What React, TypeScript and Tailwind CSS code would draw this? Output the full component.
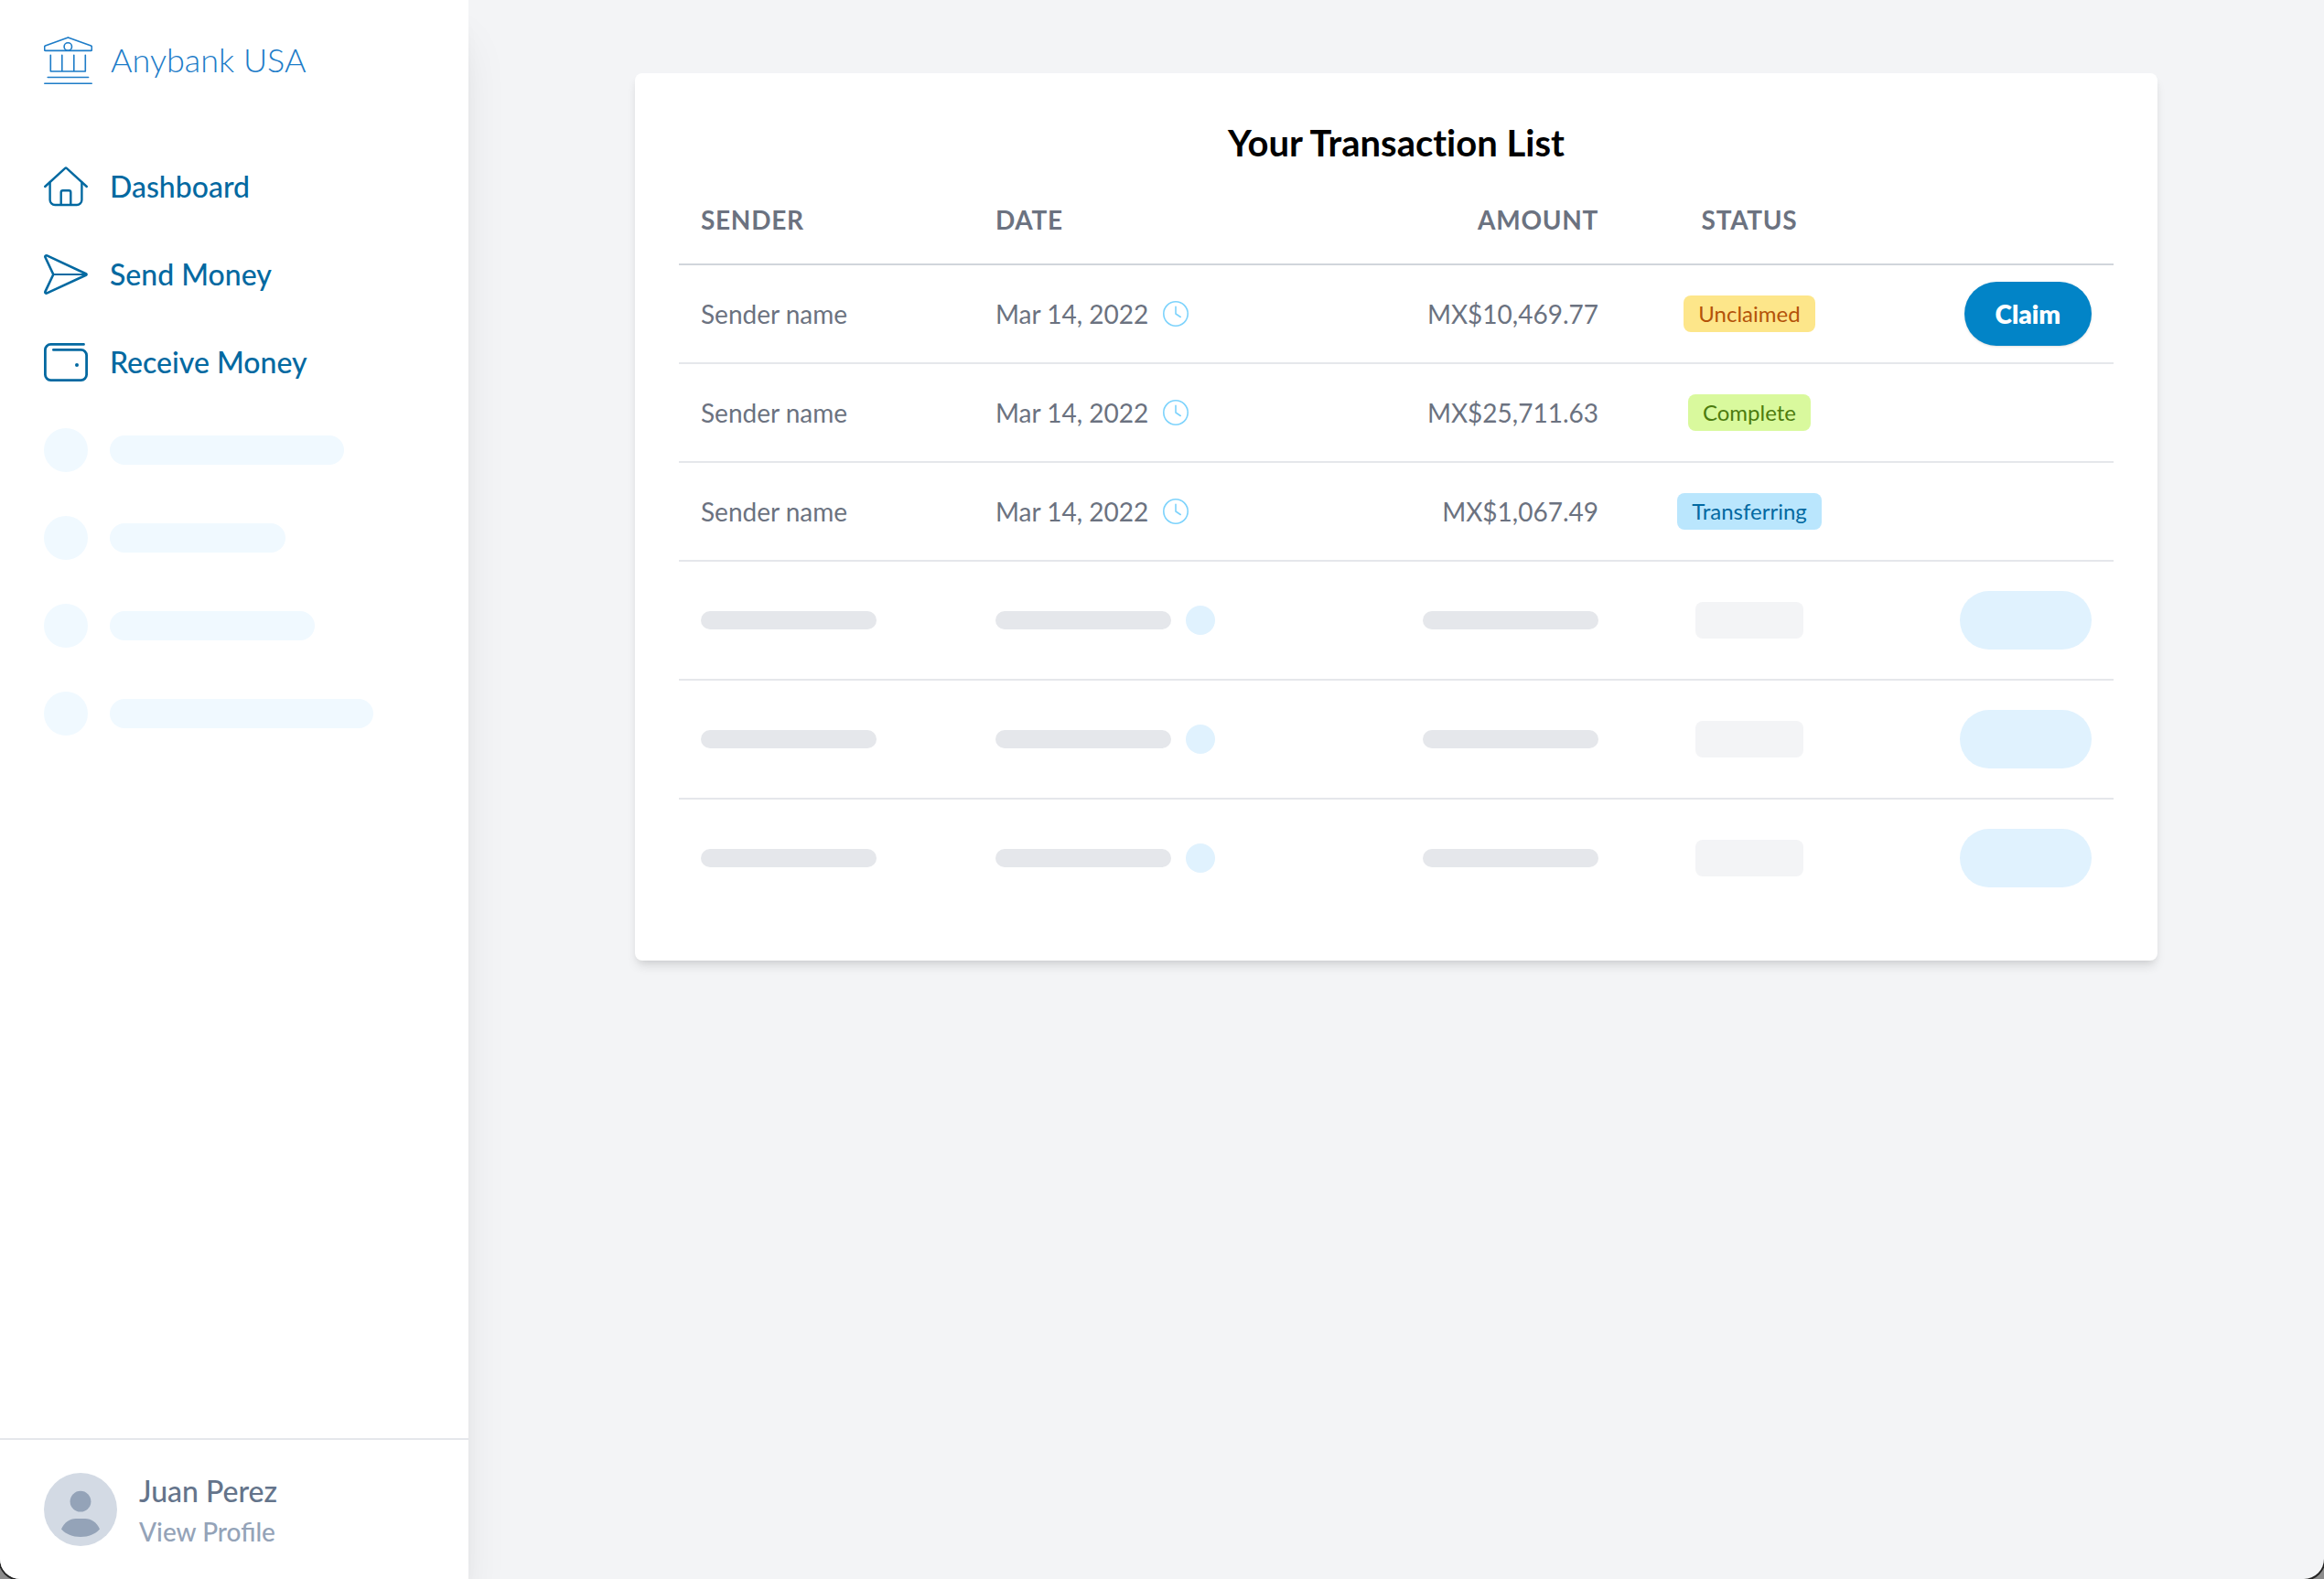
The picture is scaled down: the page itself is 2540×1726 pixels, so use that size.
import React from 'react';

interface Transaction {
  sender: string;
  date: string;
  amount: string;
  status: 'Unclaimed' | 'Complete' | 'Transferring';
}

const transactions: Transaction[] = [
  { sender: 'Sender name', date: 'Mar 14, 2022', amount: 'MX$10,469.77', status: 'Unclaimed' },
  { sender: 'Sender name', date: 'Mar 14, 2022', amount: 'MX$25,711.63', status: 'Complete' },
  { sender: 'Sender name', date: 'Mar 14, 2022', amount: 'MX$1,067.49', status: 'Transferring' },
];

const statusColors = {
  Unclaimed: 'bg-[#fde68a] text-[#b45309]',
  Complete: 'bg-[#d9f99d] text-[#4d7c0f]',
  Transferring: 'bg-[#bae6fd] text-[#0369a1]',
};

const BankLogo = () => (
  <svg className="h-[53px] w-[53px]" viewBox="0 0 53 53" fill="none" stroke="currentColor" strokeWidth="1.6" strokeLinecap="round" strokeLinejoin="round" aria-hidden="true">
    <path d="M1.5 15.4a.8.8 0 0 1-.8-.8v-3.5c0-.5.3-.9.8-1.1L26.4.9 51.5 10c.5.2.8.6.8 1.1v3.5a.8.8 0 0 1-.8.8z" />
    <circle cx="26.3" cy="11" r="4.2" />
    <path d="M7.3 20.3V38h38V20.3M19.8 20.3V38M32.8 20.3V38M4.2 44.5h44.4M.8 51.2h51.4" />
  </svg>
);

const HomeIcon = () => (
  <svg className="h-12 w-12" viewBox="0 0 48 48" fill="none" stroke="currentColor" strokeWidth="2.4" strokeLinecap="round" strokeLinejoin="round" aria-hidden="true">
    <path d="M1.2 24 23.2 3.9c.5-.4 1.1-.4 1.6 0L46.8 24" />
    <path d="M6.6 19.5v19a5.5 5.5 0 0 0 5.5 5.5h23.8a5.5 5.5 0 0 0 5.5-5.5v-19" />
    <path d="M18.7 43.8V30.2a2 2 0 0 1 2-2h6.6a2 2 0 0 1 2 2v13.6" />
  </svg>
);

const SendIcon = () => (
  <svg className="h-12 w-12" viewBox="0 0 48 48" fill="none" stroke="currentColor" strokeWidth="2.6" strokeLinecap="round" strokeLinejoin="round" aria-hidden="true">
    <path d="M3.4 3.4 45.9 23.2c.8.4.8 1.2 0 1.6L3.4 44.4c-1.3.6-2.5-.5-1.9-1.8L10.3 24 1.5 5.2c-.6-1.3.6-2.4 1.9-1.8z" />
    <path d="M10.3 24h36" strokeWidth="2.2" />
  </svg>
);

const WalletIcon = () => (
  <svg className="h-12 w-12" viewBox="0 0 48 48" fill="none" stroke="currentColor" strokeWidth="2.8" strokeLinecap="round" strokeLinejoin="round" aria-hidden="true">
    <path d="M43.5 4.4H7.4a6 6 0 0 0-6 6v27.2a6 6 0 0 0 6 6h33.2a6 6 0 0 0 6-6V16.4a6 6 0 0 0-6-6H10.4" />
    <circle cx="36" cy="27" r="2" fill="currentColor" stroke="none" />
  </svg>
);

const ClockIcon = () => (
  <svg className="h-8 w-8 text-[#7dd3fc]" viewBox="0 0 32 32" fill="none" stroke="currentColor" strokeWidth="1.6" strokeLinecap="round" strokeLinejoin="round" aria-hidden="true">
    <circle cx="16" cy="16" r="13.2" />
    <path d="M16 8.3V16l5.2 3.5" />
  </svg>
);

const Avatar = () => (
  <svg className="h-20 w-20" viewBox="0 0 80 80" aria-hidden="true">
    <circle cx="40" cy="40" r="40" fill="#d3dae4" />
    <circle cx="40" cy="31.2" r="11.4" fill="#94a3b8" />
    <path d="M19 61.5C22.5 54 28 50 35 50h10c7 0 12.5 4 16 11.5-5 5.5-12 8.5-21 8.5s-16-3-21-8.5z" fill="#94a3b8" />
  </svg>
);

const navItems = [
  { label: 'Dashboard', icon: <HomeIcon /> },
  { label: 'Send Money', icon: <SendIcon /> },
  { label: 'Receive Money', icon: <WalletIcon /> },
];

const navPlaceholders = ['w-64', 'w-48', 'w-56', 'w-72'];

const Sidebar = () => (
  <aside className="relative z-10 flex w-[512px] shrink-0 flex-col bg-white shadow-[0_40px_50px_-10px_rgba(0,0,0,0.1),0_16px_20px_-12px_rgba(0,0,0,0.1)]">
    <a href="#" className="flex items-start gap-5 px-12 pt-10 text-[#1d7cc8]">
      <BankLogo />
      <span className="text-[36px] leading-[50px] font-light">Anybank USA</span>
    </a>
    <nav className="flex flex-col gap-12 px-12 pt-[87px]">
      {navItems.map((item) => (
        <a key={item.label} href="#" className="flex items-center gap-6 text-[32px] leading-[48px] font-medium text-[#0369a1]">
          {item.icon}
          {item.label}
        </a>
      ))}
      {navPlaceholders.map((width) => (
        <div key={width} className="flex items-center gap-6">
          <div className="h-12 w-12 rounded-full bg-[#f0f9ff]" />
          <div className={`h-8 rounded-full bg-[#f0f9ff] ${width}`} />
        </div>
      ))}
    </nav>
    <a href="#" className="mt-auto flex items-center gap-6 border-t-2 border-[#e5e7eb] px-12 py-8">
      <Avatar />
      <div className="font-medium">
        <p className="text-[32px] leading-[48px] text-[#64748b]">Juan Perez</p>
        <p className="text-[28px] leading-[40px] text-[#94a3b8]">View Profile</p>
      </div>
    </a>
  </aside>
);

const TransactionRow = ({ transaction }: { transaction: Transaction }) => (
  <tr className="h-[108px] border-b-2 border-[#e5e7eb]">
    <td className="px-6">{transaction.sender}</td>
    <td className="px-6">
      <div className="flex items-center gap-3.5">
        {transaction.date}
        <ClockIcon />
      </div>
    </td>
    <td className="px-6 text-right">{transaction.amount}</td>
    <td className="px-6">
      <div className="flex justify-center">
        <span className={`rounded-lg px-4 py-1 text-2xl leading-8 ${statusColors[transaction.status]}`}>
          {transaction.status}
        </span>
      </div>
    </td>
    <td className="px-6">
      {transaction.status === 'Unclaimed' && (
        <div className="flex justify-end">
          <button type="button" className="h-[70px] rounded-full bg-[#0284c7] px-[34px] font-extrabold text-white shadow-sm">
            Claim
          </button>
        </div>
      )}
    </td>
  </tr>
);

const PlaceholderRow = () => (
  <tr className="h-[130px] border-b-2 border-[#e5e7eb] last:h-[129px] last:border-b-0">
    <td className="px-6">
      <div className="h-5 w-48 rounded-full bg-[#e5e7eb]" />
    </td>
    <td className="px-6">
      <div className="flex items-center gap-4">
        <div className="h-5 w-48 rounded-full bg-[#e5e7eb]" />
        <div className="h-8 w-8 rounded-full bg-[#e0f2fe]" />
      </div>
    </td>
    <td className="px-6">
      <div className="ml-auto h-5 w-48 rounded-full bg-[#e5e7eb]" />
    </td>
    <td className="px-6">
      <div className="mx-auto h-10 w-[118px] rounded-lg bg-[#f3f4f6]" />
    </td>
    <td className="px-6">
      <div className="ml-auto h-16 w-36 rounded-full bg-[#e0f2fe]" />
    </td>
  </tr>
);

const TransactionList = () => (
  <section className="mx-auto max-w-[1664px] rounded-lg bg-white p-12 shadow-[0_8px_12px_-2px_rgba(0,0,0,0.1),0_4px_8px_-4px_rgba(0,0,0,0.1)]">
    <h1 className="mb-2 text-center text-[40px] leading-[56px] font-bold text-black [font-variant-ligatures:no-common-ligatures]">
      Your Transaction List
    </h1>
    <table className="w-full table-fixed border-collapse text-[28px] leading-[40px] text-[#6b7280]">
      <thead>
        <tr className="h-[97px] border-b-2 border-[#d1d5db] tracking-wide uppercase">
          <th className="w-[322px] px-6 text-left font-bold">Sender</th>
          <th className="px-6 text-left font-bold">Date</th>
          <th className="w-[300px] px-6 text-right font-bold">Amount</th>
          <th className="w-[282px] px-6 text-center font-bold">Status</th>
          <td className="w-[257px]" />
        </tr>
      </thead>
      <tbody>
        {transactions.map((transaction) => (
          <TransactionRow key={transaction.amount} transaction={transaction} />
        ))}
        <PlaceholderRow />
        <PlaceholderRow />
        <PlaceholderRow />
      </tbody>
    </table>
  </section>
);

export default function App() {
  return (
    <div className="bg-[#8c8c8c] font-['Lato',sans-serif]">
      <div className="flex min-h-screen overflow-hidden rounded-b-[22px] bg-[#f3f4f6] shadow-[0_0_0_2px_#222222]">
        <Sidebar />
        <main className="flex-1 px-20 pt-20">
          <TransactionList />
        </main>
      </div>
    </div>
  );
}
